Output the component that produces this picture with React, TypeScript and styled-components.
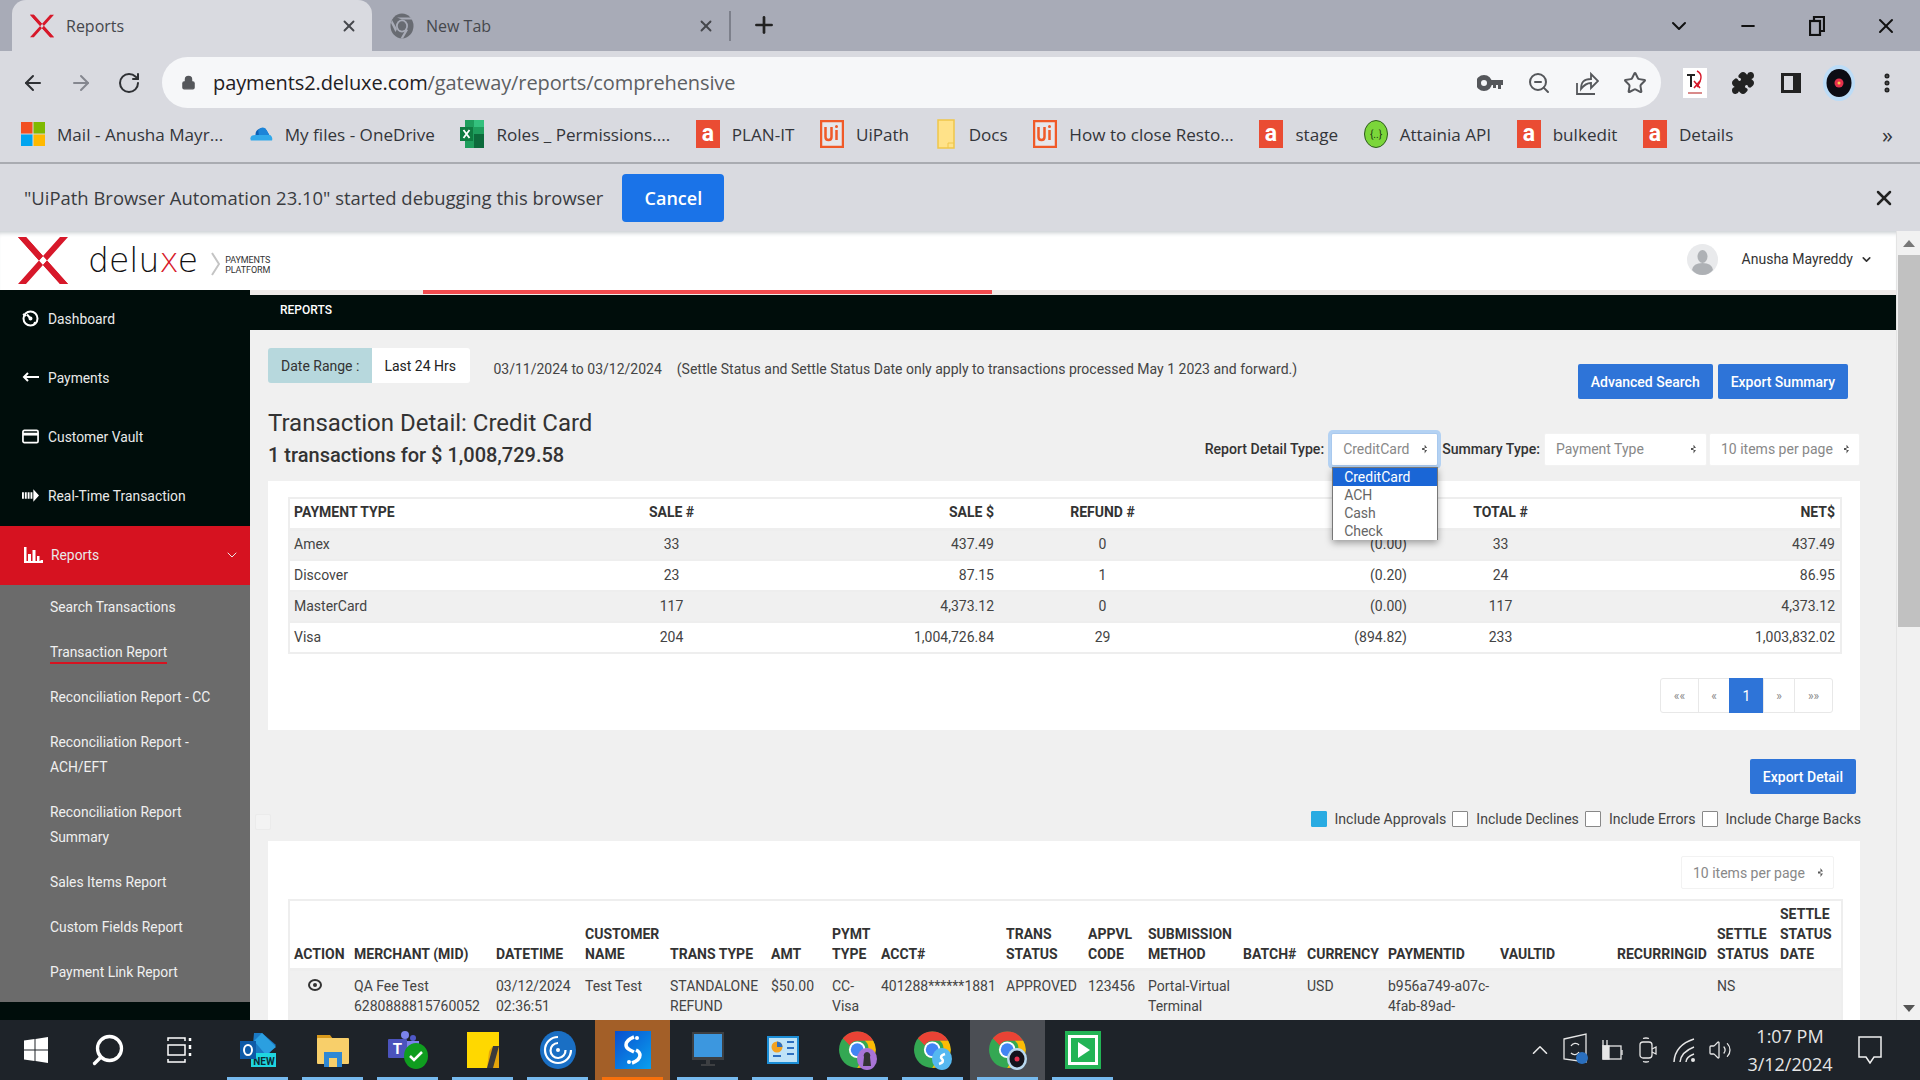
import { ChevronDown, Lock, ArrowLeft, ArrowRight, RotateCw, ZoomOut, Star, Puzzle, X, Plus, Minus, EllipsisVertical, Search, ChevronUp, Volume2 } from "lucide-react";
import styled, { createGlobalStyle } from "styled-components";

const Global = createGlobalStyle`
	html, body {
		margin: 0;
		padding: 0;
		width: 1920px;
		height: 1080px;
		overflow: hidden;
		background: #f0f0f0;
		font-family: Roboto, "Liberation Sans", sans-serif;
	}
	* {
		box-sizing: border-box;
	}
`;

const Shell = styled.div`
	width: 1920px;
	height: 1080px;
	display: flex;
	flex-direction: column;
	overflow: hidden;
`;

/* browser chrome */
const TabStrip = styled.div`
	height: 51px;
	flex: none;
	background: #a8abb7;
	display: flex;
	align-items: flex-end;
	padding-left: 12px;
	font-family: "Open Sans", sans-serif;
`;

const Tab = styled.div<{ $active?: boolean }>`
	width: ${(p) => (p.$active ? 360 : 357)}px;
	height: 51px;
	display: flex;
	align-items: center;
	gap: 12px;
	padding: 0 14px 0 18px;
	border-radius: 14px 14px 0 0;
	background: ${(p) => (p.$active ? "#d9dae0" : "transparent")};
	color: #45474c;
	font-size: 16px;
`;

const TabTitle = styled.span`
	flex: 1;
`;

const TabDivider = styled.div`
	width: 2px;
	height: 30px;
	margin-bottom: 10px;
	background: #7d808b;
`;

const NewTab = styled.div`
	margin: 0 0 13px 20px;
	height: 26px;
	color: #222;
`;

const WindowControls = styled.div`
	margin-left: auto;
	height: 51px;
	display: flex;
	align-items: center;
	color: #111;
`;

const WindowButton = styled.div`
	width: 69px;
	display: flex;
	justify-content: center;
`;

const Toolbar = styled.div`
	height: 57px;
	flex: none;
	background: #d9dae0;
	display: flex;
	align-items: center;
	padding: 6px 0 0 21px;
	color: #45474c;
`;

const NavButton = styled.div<{ $dim?: boolean }>`
	width: 24px;
	height: 24px;
	margin-right: 24px;
	color: ${(p) => (p.$dim ? "#85878f" : "#2e3034")};

	&:nth-child(3) {
		margin-right: 21px;
	}
`;

const UrlBar = styled.div`
	width: 1499px;
	height: 51px;
	border-radius: 26px;
	background: #f6f7f9;
	display: flex;
	align-items: center;
	padding: 0 14px 0 19px;
`;

const UrlText = styled.div`
	flex: 1;
	margin-left: 17px;
	font-family: "Open Sans", sans-serif;
	font-size: 20px;
	color: #5d5f63;
	letter-spacing: -0.1px;

	b {
		font-weight: 400;
		color: #1f2023;
	}
`;

const UrlIcons = styled.div`
	display: flex;
	align-items: center;
	gap: 24px;
	color: #55575b;
`;

const ExtIcons = styled.div`
	display: flex;
	align-items: center;
	gap: 24px;
	margin-left: 22px;
	color: #222;

	& > :nth-child(4) {
		margin: 0 -4px;
	}
`;

const Bookmarks = styled.div`
	height: 56px;
	flex: none;
	background: #d9dae0;
	border-bottom: 2px solid #a9abb1;
	display: flex;
	align-items: center;
	padding: 0 0 2px 21px;
	gap: 25.6px;
	font-family: "Open Sans", sans-serif;
	font-size: 17.1px;
	color: #33353a;
`;

const Bookmark = styled.div`
	display: flex;
	align-items: center;
	gap: 12px;
	white-space: nowrap;
`;

const MoreBookmarks = styled.div`
	margin-left: auto;
	margin-right: 27px;
	font-size: 22px;
`;

const InfoBar = styled.div`
	height: 67px;
	flex: none;
	background: #d9dae0;
	display: flex;
	align-items: center;
	padding: 0 24px;
	gap: 19px;
	font-family: "Open Sans", sans-serif;
	font-size: 18.45px;
	color: #3a3c40;
`;

const CancelButton = styled.div`
	width: 102px;
	height: 48px;
	border-radius: 4px;
	background: #1a73e8;
	color: #fff;
	font-weight: 600;
	display: flex;
	align-items: center;
	justify-content: center;
	font-size: 18px;
`;

const InfoClose = styled.div`
	margin-left: auto;
	height: 24px;
	color: #222;
`;

/* page */
const Page = styled.div`
	flex: 1;
	min-height: 0;
	display: flex;
`;

const Viewport = styled.div`
	flex: 1;
	min-width: 0;
	display: flex;
	flex-direction: column;
	overflow: hidden;
`;

const Header = styled.header`
	height: 59px;
	flex: none;
	background: #fff;
	display: flex;
	align-items: center;
	padding: 0 23px 0 18px;
	box-shadow: inset 0 5px 4px -3px #c9ced2;
`;

const LogoWord = styled.div`
	margin-left: 20px;
	font-family: "DejaVu Sans", sans-serif;
	font-size: 33px;
	font-weight: 300;
	line-height: 1;
	color: #111;

	i {
		font-style: normal;
		color: #d7182a;
	}
`;

const LogoChevron = styled.div`
	margin: 6px 5px 0 13px;
	height: 24px;
`;

const LogoTag = styled.div`
	font-size: 9px;
	letter-spacing: -0.1px;
	line-height: 10px;
	color: #333;
	margin-top: 8px;
`;

const UserBox = styled.div`
	margin: 0 0 2px auto;
	display: flex;
	align-items: center;
	font-size: 14px;
	color: #333;
`;

const UserName = styled.span`
	margin: 0 7px 1px 24px;
`;

const Body = styled.div`
	flex: 1;
	min-height: 0;
	display: flex;
`;

const Sidebar = styled.nav`
	width: 250px;
	flex: none;
	background: #000d0b;
	color: #e9e9e9;
	font-size: 13.85px;
`;

const NavItem = styled.div<{ $active?: boolean }>`
	height: 59px;
	display: flex;
	align-items: center;
	gap: ${(p) => (p.$active ? 8 : 9)}px;
	padding: 0 10px 2px ${(p) => (p.$active ? 24 : 22)}px;
	background: ${(p) => (p.$active ? "#d61220" : "transparent")};
`;

const NavChevron = styled.div`
	margin-left: auto;
	height: 16px;
`;

const SubMenu = styled.div`
	background: #6b6b6b;
	padding-bottom: 7px;
`;

const SubItem = styled.div`
	padding: 10px 30px 10px 50px;
	line-height: 25px;
	color: #f0f0f0;
`;

const Underlined = styled.span`
	display: inline-block;
	line-height: 19px;
	border-bottom: 2px solid #d61220;
`;

const Main = styled.main`
	flex: 1;
	min-width: 0;
	overflow: hidden;
	background: #f0f0f0;
`;

const LoadTrack = styled.div`
	height: 5px;
	background: #efebe9;
	display: flex;
`;

const LoadBar = styled.div`
	width: 569px;
	height: 4px;
	margin-left: 173px;
	background: #f24b4f;
`;

const SubBar = styled.div`
	height: 35px;
	background: #000d0b;
	color: #fff;
	font-size: 12px;
	font-weight: 500;
	display: flex;
	align-items: center;
	padding: 0 0 6px 30px;
`;

const Content = styled.div`
	padding: 18px 36px 0 18px;
	color: #333;
`;

const TopRow = styled.div`
	display: flex;
	height: 51px;
	font-size: 14px;
`;

const DateLabel = styled.div`
	height: 35px;
	display: flex;
	align-items: center;
	padding: 0 13px;
	border-radius: 3px 0 0 3px;
	background: #b7d8dd;
`;

const DateValue = styled.div`
	height: 35px;
	width: 98px;
	display: flex;
	align-items: center;
	padding-left: 12px;
	border-radius: 0 3px 3px 0;
	background: #fff;
	color: #222;
`;

const DateNote = styled.div`
	height: 35px;
	margin-left: 23px;
	display: flex;
	align-items: center;
	gap: 15px;
	padding-top: 6px;
	color: #444;
`;

const TopActions = styled.div`
	margin-left: auto;
	margin-right: 12px;
	padding-top: 16px;
	display: flex;
	gap: 5px;
`;

const PrimaryButton = styled.div`
	height: 35px;
	padding: 0 13px;
	border-radius: 2px;
	background: #2e74d8;
	color: #fff;
	font-size: 14px;
	font-weight: 500;
	display: flex;
	align-items: center;
`;

const TitleRow = styled.div`
	height: 73px;
	margin-top: 9px;
	display: flex;
	justify-content: space-between;
`;

const Title = styled.h1`
	margin: 0;
	font-size: 24px;
	font-weight: 400;
	line-height: 30px;
	color: #333;
`;

const SubTitle = styled.h2`
	margin: 5px 0 0;
	font-size: 20px;
	font-weight: 500;
	line-height: 24px;
	color: #333;
`;

const Filters = styled.div`
	display: flex;
	align-items: center;
	height: 34px;
	margin-top: 24px;
	font-size: 14.1px;
	font-weight: 500;
`;

const FilterLabel = styled.span`
	margin-right: 4px;
	white-space: nowrap;

	&:first-child {
		margin-right: 7px;
	}
`;

const SelectWrap = styled.div`
	position: relative;
`;

const Select = styled.div<{ $w: number; $focus?: boolean }>`
	width: ${(p) => p.$w}px;
	height: 33px;
	margin-right: ${(p) => (p.$focus ? 4 : 2)}px;
	padding: 0 10px 0 11px;
	display: flex;
	align-items: center;
	justify-content: space-between;
	font-size: 14px;
	font-weight: 400;
	color: #888;
	background: #fff;
	border: 1px solid ${(p) => (p.$focus ? "#a9c9ee" : "#f2f2f2")};
	box-shadow: ${(p) => (p.$focus ? "0 0 0 3px #b4d2f3" : "none")};
	border-radius: 2px;

	&:last-child {
		margin-right: 0;
	}

	&::after {
		content: "";
		width: 5px;
		height: 9px;
		background: #555;
		clip-path: polygon(50% 0, 100% 38%, 0 38%, 0 62%, 100% 62%, 50% 100%);
	}
`;

const Dropdown = styled.ul`
	position: absolute;
	left: 1px;
	top: 34px;
	width: 106px;
	margin: 0;
	padding: 0;
	list-style: none;
	background: #fff;
	border: 1px solid #777;
	border-bottom: 0;
	box-shadow: 0 3px 7px rgba(0, 0, 0, 0.35);
	font-size: 14px;
	font-weight: 400;
	color: #666;
	z-index: 3;
`;

const DropdownOption = styled.li<{ $selected?: boolean }>`
	height: 18px;
	line-height: 18px;
	padding-left: 11px;
	background: ${(p) => (p.$selected ? "#1a66d6" : "transparent")};
	color: ${(p) => (p.$selected ? "#fff" : "#666")};
`;

const Card = styled.section`
	background: #fff;
	padding: 16px 20px 17px;
`;

const DataTable = styled.table`
	width: 100%;
	border-collapse: collapse;
	table-layout: fixed;
	border: 2px solid #eee;
	font-size: 14px;
	color: #444;
`;

const HeadCell = styled.th<{ $align?: string }>`
	padding: 0 5px 2px 4px;
	height: 31px;
	font-weight: 700;
	color: #333;
	text-align: ${(p) => p.$align || "left"};
	border-bottom: 3px solid #eee;
`;

const Row = styled.tr<{ $shade?: boolean }>`
	background: ${(p) => (p.$shade ? "#f0f0f0" : "#fff")};
	border-bottom: 2px solid #eee;
`;

const Cell = styled.td<{ $align?: string }>`
	padding: 0 5px 2px 4px;
	height: 31px;
	text-align: ${(p) => p.$align || "left"};
`;

const Pager = styled.div`
	margin: 24px 7px 0 0;
	display: flex;
	justify-content: flex-end;
`;

const PageButton = styled.div<{ $w: number; $active?: boolean }>`
	width: ${(p) => p.$w}px;
	height: 35px;
	display: flex;
	align-items: center;
	justify-content: center;
	border: 1px solid #e8e8e8;
	margin-left: -1px;
	font-size: ${(p) => (p.$active ? 14 : 12)}px;
	color: ${(p) => (p.$active ? "#fff" : "#888")};
	background: ${(p) => (p.$active ? "#2e74d8" : "#fff")};
	border-color: ${(p) => (p.$active ? "#2e74d8" : "#e8e8e8")};

	&:first-child {
		border-radius: 3px 0 0 3px;
	}
	&:last-child {
		border-radius: 0 3px 3px 0;
	}
`;

const ExportRow = styled.div`
	margin: 29px 4px 0 0;
	display: flex;
	justify-content: flex-end;
`;

const IncludeRow = styled.div`
	margin: 17px -1px 0 0;
	height: 16px;
	display: flex;
	justify-content: flex-end;
	align-items: center;
	font-size: 14.1px;
	color: #444;
`;

const FaintBox = styled.span`
	width: 16px;
	height: 16px;
	margin: 6px auto 0 -13px;
	border: 1px solid #ebebeb;
	border-radius: 2px;
	background: #f3f3f3;
`;

const Include = styled.label`
	display: flex;
	align-items: center;
	gap: 8px;
	margin-left: 6px;
`;

const CheckBox = styled.span<{ $on?: boolean }>`
	width: 16px;
	height: 16px;
	background: ${(p) => (p.$on ? "#29abe2" : "#fff")};
	border: 1px solid ${(p) => (p.$on ? "#29abe2" : "#888")};
	border-radius: 1px;
`;

const DetailCard = styled(Card)`
	margin-top: 14px;
	padding: 15px 20px 0;
`;

const DetailTools = styled.div`
	display: flex;
	justify-content: flex-end;
	padding-right: 6px;
	margin-bottom: 10px;
`;

const DetailCol = styled.col<{ $w: number }>`
	width: ${(p) => p.$w}px;
`;

const DetailHead = styled.th`
	padding: 3px 3px 4px 4px;
	vertical-align: bottom;
	text-align: left;
	font-weight: 700;
	line-height: 20px;
	color: #333;
	border-bottom: 3px solid #eee;
`;

const DetailCell = styled.td`
	padding: 5px 3px 5px 4px;
	vertical-align: top;
	line-height: 20px;
`;

const EyeMark = styled.svg`
	display: block;
	margin: 3px 0 0 14px;
`;

const ScrollBar = styled.div`
	width: 24px;
	flex: none;
	background: #f1f1f1;
	border-left: 1px solid #e4e4e4;
	display: flex;
	flex-direction: column;
	align-items: center;
`;

const ScrollArrow = styled.div<{ $down?: boolean }>`
	width: 0;
	height: 0;
	margin-top: ${(p) => (p.$down ? "auto" : "9px")};
	margin-bottom: ${(p) => (p.$down ? "8px" : "0")};
	border-left: 6px solid transparent;
	border-right: 6px solid transparent;
	border-bottom: ${(p) => (p.$down ? "0" : "7px solid #777")};
	border-top: ${(p) => (p.$down ? "7px solid #555" : "0")};
`;

const ScrollThumb = styled.div`
	width: 22px;
	height: 372px;
	margin-top: 8px;
	background: #c1c1c1;
`;

/* taskbar */
const TaskBar = styled.footer`
	height: 60px;
	flex: none;
	background: #1e2329;
	display: flex;
	align-items: stretch;
	color: #fff;
	font-family: "Open Sans", sans-serif;
`;

const StartSlot = styled.div`
	width: 72px;
	flex: none;
	display: flex;
	align-items: center;
	justify-content: center;

	&:nth-child(3) {
		margin-right: 4px;
	}
`;

const TaskSlot = styled.div<{ $tone?: string; $line?: string }>`
	width: 75px;
	flex: none;
	display: flex;
	align-items: center;
	justify-content: center;
	background: ${(p) => p.$tone || "transparent"};
	position: relative;

	&::after {
		content: "";
		position: absolute;
		left: 7px;
		right: 7px;
		bottom: 0;
		height: 3px;
		background: ${(p) => p.$line || "#76b9ed"};
	}
`;

const Tray = styled.div`
	margin-left: auto;
	display: flex;
	align-items: center;
	padding-right: 38px;
	color: #e6e6e6;
`;

const TrayItem = styled.div`
	width: 36px;
	display: flex;
	justify-content: center;
`;

const Clock = styled.div`
	width: 92px;
	margin: 0 22px 0 6px;
	text-align: center;
	font-size: 18px;
	line-height: 28px;
`;

/* drawings */
const XMark = ({ w, h }: { w: number; h: number }) => (
	<svg width={w} height={h} viewBox="0 0 50 47">
		<path d="M0 0h8l42 47h-8zM50 0h-8L0 47h8z" fill="#d7182a" />
		<path d="M0 0h8l17 19-4 4.500zM50 47h-8L25 28l4-4.500z" fill="#d7182a" />
	</svg>
);

const ATile = () => (
	<svg width="24" height="28" viewBox="0 0 24 28">
		<rect width="24" height="28" fill="#ea4c33" />
		<text x="12" y="21" textAnchor="middle" fontSize="23" fontWeight="700" fill="#fff" fontFamily="Roboto">a</text>
	</svg>
);

const UiTile = () => (
	<svg width="24" height="28" viewBox="0 0 24 28">
		<rect x="1" y="1" width="22" height="26" fill="#fff" fillOpacity="0.35" stroke="#f05a28" strokeWidth="2.500" />
		<path d="M5.500 7v10q0 3 3 3t3-3V7M16.500 10v10" fill="none" stroke="#f05a28" strokeWidth="2.500" />
		<circle cx="16.500" cy="6.500" r="1.500" fill="#f05a28" />
	</svg>
);

const Windows4 = () => (
	<svg width="24" height="24" viewBox="0 0 24 26" preserveAspectRatio="none">
		<rect width="11.500" height="12.500" fill="#f25022" />
		<rect x="12.500" width="11.500" height="12.500" fill="#7fba00" />
		<rect y="13.500" width="11.500" height="12.500" fill="#00a4ef" />
		<rect x="12.500" y="13.500" width="11.500" height="12.500" fill="#ffb900" />
	</svg>
);

const OneDrive = () => (
	<svg width="24" height="24" viewBox="0 0 26 24">
		<path d="M7 13a7 7 0 0 1 12-5l4 7H6z" fill="#0a5fb5" />
		<path d="M10 8q3-5 8-2l4 7-11 3z" fill="#1c84d8" />
		<path d="M2 19q-2-6 5-6h16q3 2 2 6z" fill="#31a8ea" />
	</svg>
);

const Excel = () => (
	<svg width="24" height="28" viewBox="0 0 24 28">
		<rect x="5" width="19" height="28" fill="#1f9e5d" />
		<rect x="14" y="14" width="10" height="14" fill="#0d6b3c" />
		<rect x="14" width="10" height="7" fill="#34c07d" />
		<rect y="7" width="13" height="14" fill="#0f7b41" />
		<path d="M3.500 10l6 8M9.500 10l-6 8" stroke="#fff" strokeWidth="1.800" />
	</svg>
);

const Folder = () => (
	<svg width="22" height="30" viewBox="0 0 22 30">
		<path d="M3 1h16v28H3z" fill="#ffe289" stroke="#f0c64a" strokeWidth="1.500" />
		<path d="M13 29v-5h6" fill="none" stroke="#f0c64a" />
	</svg>
);

const ApiIcon = () => (
	<svg width="24" height="28" viewBox="0 0 24 28">
		<ellipse cx="12" cy="14" rx="11.500" ry="13.500" fill="#7bd63a" stroke="#2d5a1e" strokeWidth="1" />
		<text x="12" y="18" textAnchor="middle" fontSize="10" fill="#1b3313" fontFamily="Roboto">{"{..}"}</text>
	</svg>
);

const GreyChrome = () => (
	<svg width="24" height="26" viewBox="0 0 48 52">
		<ellipse cx="24" cy="26" rx="23" ry="25" fill="#686b72" />
		<ellipse cx="24" cy="26" rx="12" ry="13" fill="#a8abb7" />
		<ellipse cx="24" cy="26" rx="8.500" ry="9.500" fill="#686b72" />
		<path d="M24 13h21l-2-4H14zM14 32L4 14l-2 6 9 18zM32 32l-11 19h5l10-17z" fill="#a8abb7" />
	</svg>
);

const KeyIcon = () => (
	<svg width="26" height="22" viewBox="0 0 26 22" fill="#55575b">
		<path d="M7 3a8 8 0 1 1 0 16A8 8 0 0 1 7 3zm0 5a3 3 0 1 0 0 6 3 3 0 0 0 0-6z" fillRule="evenodd" />
		<path d="M13 8h13v5h-2v4h-3v-4h-2v3h-3v-3h-3z" />
	</svg>
);

const ShareIcon = () => (
	<svg width="24" height="26" viewBox="0 0 24 26" fill="none" stroke="#55575b" strokeWidth="1.800">
		<path d="M2 13v11h18" />
		<path d="M6 19c0-7 3-10 10-10V4l7 7-7 7v-5c-4 0-7 2-10 6z" />
	</svg>
);

const PanelIcon = () => (
	<svg width="24" height="24" viewBox="0 0 24 24">
		<path d="M2 2h20v20H2z" fill="#222" />
		<path d="M5 5h9v14H5z" fill="#d9dae0" />
	</svg>
);

const TxIcon = () => (
	<svg width="24" height="30" viewBox="0 0 24 30">
		<rect width="24" height="30" fill="#fff" />
		<path d="M4 7h8M8 7v12" stroke="#222" strokeWidth="2" />
		<path d="M11 13l6 7M17 13l-6 7" stroke="#d7182a" strokeWidth="1.600" />
		<path d="M14 3q8 4 0 16" fill="none" stroke="#d7182a" strokeWidth="1.400" />
		<rect x="5" y="24" width="14" height="2" fill="#d98a8a" />
	</svg>
);

const VinylAvatar = () => (
	<svg width="32" height="36" viewBox="0 0 32 36">
		<ellipse cx="16" cy="18" rx="16" ry="18" fill="#bcdcf7" />
		<ellipse cx="16" cy="18" rx="12.500" ry="14" fill="#0c0c14" />
		<circle cx="16" cy="18" r="4.500" fill="#e5304e" />
		<circle cx="16" cy="18" r="1.500" fill="#f7c948" />
	</svg>
);

const DashIcon = () => (
	<svg width="17" height="17" viewBox="0 0 17 17" fill="none" stroke="#fff" strokeWidth="2">
		<circle cx="8.500" cy="8.500" r="7" />
		<path d="M8.500 8.500L5 4.500M1 4l3 2M12 15l1-3" />
		<circle cx="8.500" cy="8.500" r="1" fill="#fff" />
	</svg>
);

const PayIcon = () => (
	<svg width="17" height="12" viewBox="0 0 17 12" fill="none" stroke="#fff" strokeWidth="2">
		<path d="M17 5H3M6 1L2 5l4 4" />
	</svg>
);

const VaultIcon = () => (
	<svg width="17" height="15" viewBox="0 0 18 15">
		<rect x="1" y="1" width="16" height="13" rx="1.500" fill="none" stroke="#fff" strokeWidth="1.800" />
		<rect x="1" y="3.500" width="16" height="3" fill="#fff" />
	</svg>
);

const RealtimeIcon = () => (
	<svg width="17" height="13" viewBox="0 0 18 13" fill="#fff">
		<path d="M0 3h2v7H0zM3 3h2v7H3zM6 3h2v7H6zM9 3h2v7H9zM12 0l6 6.500-6 6.500z" />
	</svg>
);

const BarsIcon = () => (
	<svg width="19" height="16" viewBox="0 0 19 16" fill="#fff">
		<path d="M0 0h2.500v16H0zM4 7h3v9H4zM8.500 3h3v13h-3zM13 9h2.500v7H13zM16.500 13H19v3h-2.500z" />
		<path d="M0 14h19v2H0z" />
	</svg>
);

const PersonIcon = () => (
	<svg width="31" height="31" viewBox="0 0 31 31">
		<circle cx="15.500" cy="15.500" r="15.500" fill="#e9eaec" />
		<ellipse cx="15.500" cy="12.500" rx="5" ry="6.500" fill="#aeb1b5" />
		<path d="M5 26q1-7 10.500-7T26 26q-4 5-10.500 5T5 26z" fill="#aeb1b5" />
	</svg>
);

const WinLogo = () => (
	<svg width="24" height="26" viewBox="0 0 24 26" fill="#fff">
		<path d="M0 3.500l10.500-1.500v10.500H0zM11.500 2L24 0v12.500H11.500zM0 13.500h10.500V24L0 22.500zM11.500 13.500H24V26l-12.500-2z" />
	</svg>
);

const TaskView = () => (
	<svg width="26" height="26" viewBox="0 0 26 26" fill="none" stroke="#fff" strokeWidth="1.500">
		<path d="M1 4V1h17v3M1 22v3h17v-3" />
		<rect x="1" y="8" width="17" height="10" />
		<path d="M23 1v3M23 8v4M23 16v3" strokeWidth="2.500" />
	</svg>
);

const OutlookIcon = () => (
	<svg width="36" height="34" viewBox="0 0 36 34">
		<path d="M14 0h8l14 12-8 10H12z" fill="#1a78c2" />
		<path d="M22 0l14 14-10 8L14 8z" fill="#2b9fe0" />
		<rect x="11" y="20" width="25" height="14" fill="#1fd5df" />
		<text x="24" y="31.500" fontSize="10" fontWeight="700" textAnchor="middle" fill="#0b2b33" fontFamily="Roboto">NEW</text>
		<rect y="8" width="16" height="18" fill="#0e5aa7" />
		<ellipse cx="8" cy="17" rx="4" ry="5" fill="none" stroke="#fff" strokeWidth="2" />
	</svg>
);

const ExplorerIcon = () => (
	<svg width="32" height="34" viewBox="0 0 32 34">
		<path d="M0 2h13l3 4H0z" fill="#d99a1c" />
		<rect y="5" width="32" height="26" rx="1" fill="#f8cf6a" />
		<rect x="7" y="19" width="18" height="15" fill="#2f88d4" />
		<rect x="12" y="25" width="8" height="9" fill="#f8cf6a" />
	</svg>
);

const TeamsIcon = () => (
	<svg width="40" height="38" viewBox="0 0 40 38">
		<circle cx="17" cy="4" r="4" fill="#7b83eb" />
		<circle cx="25" cy="7" r="3" fill="#5059c9" />
		<rect x="0" y="8" width="19" height="19" rx="1" fill="#4b53bc" />
		<text x="9.500" y="23" fontSize="15" fontWeight="700" textAnchor="middle" fill="#fff" fontFamily="Roboto">T</text>
		<path d="M19 10h12v10H19z" fill="#7b83eb" />
		<ellipse cx="28" cy="25" rx="12" ry="13" fill="#0f9d1f" />
		<path d="M22 25l4 4 8-8" stroke="#fff" strokeWidth="2.500" fill="none" />
	</svg>
);

const StickyIcon = () => (
	<svg width="32" height="36" viewBox="0 0 32 36">
		<rect width="32" height="36" fill="#ffd800" />
		<path d="M32 14v22H20l2-16q1-6 10-6z" fill="#e5a50a" />
		<path d="M20 36l6-22h6L26 36z" fill="#3b3b3b" />
	</svg>
);

const SwirlIcon = () => (
	<svg width="36" height="38" viewBox="0 0 36 38">
		<ellipse cx="18" cy="19" rx="18" ry="19" fill="#1a6fc4" />
		<path d="M18 6A13 13 0 1 0 31 19M18 12A7.500 7.500 0 1 0 25.500 19" fill="none" stroke="#fff" strokeWidth="2.200" />
		<circle cx="18" cy="19" r="2" fill="#fff" />
	</svg>
);

const STile = () => (
	<svg width="36" height="38" viewBox="0 0 36 38">
		<defs>
			<linearGradient id="stile" x1="0" y1="0" x2="1" y2="1">
				<stop offset="0" stopColor="#0a4fd0" />
				<stop offset="1" stopColor="#0aa0ee" />
			</linearGradient>
		</defs>
		<rect width="36" height="38" fill="url(#stile)" />
		<path d="M19 6q-8 3-8 8 0 3 4 5l4 2" fill="none" stroke="#fff" strokeWidth="3.500" />
		<path d="M17 32q8-3 8-8 0-3-4-5" fill="none" stroke="#fff" strokeWidth="3.500" />
		<circle cx="22" cy="7" r="2" fill="#fff" />
		<circle cx="14" cy="31" r="2" fill="#fff" />
	</svg>
);

const MonitorIcon = () => (
	<svg width="32" height="36" viewBox="0 0 32 36">
		<rect width="32" height="28" fill="#3d3f42" />
		<rect x="2" y="2" width="28" height="23" fill="#3c97df" />
		<path d="M14 28h4v4h-4zM9 32h14v2H9z" fill="#3d3f42" />
	</svg>
);

const PanelAppIcon = () => (
	<svg width="32" height="28" viewBox="0 0 32 28">
		<rect width="32" height="28" fill="#1c8ed6" />
		<rect x="2" y="2" width="28" height="24" fill="#bfe3f7" />
		<circle cx="10" cy="11" r="5.500" fill="#f3a21f" />
		<path d="M10 11V5.500a5.500 5.500 0 0 1 5.500 5.500z" fill="#2c6fc0" />
		<path d="M20 6h7M20 12h7M20 18h7M6 20h8" stroke="#2c6fc0" strokeWidth="2" />
	</svg>
);

const ChromeBadged = ({ tone }: { tone: "purple" | "blue" | "vinyl" }) => (
	<svg width="38" height="40" viewBox="0 0 38 40">
		<g transform="scale(0.76)">
			<circle cx="24" cy="26" r="24" fill="#34a853" />
			<path d="M24 2a24 24 0 0 1 21 12H24a12 12 0 0 0-10 6L5 11A24 24 0 0 1 24 2z" fill="#ea4335" />
			<path d="M45 14a24 24 0 0 1-21 36l10-17a12 12 0 0 0 0-19z" fill="#fbbc05" />
			<circle cx="24" cy="26" r="11" fill="#fff" />
			<circle cx="24" cy="26" r="8.500" fill="#4285f4" />
		</g>
		<ellipse cx="28" cy="29" rx="10" ry="11" fill={tone === "purple" ? "#a874d6" : tone === "blue" ? "#55b8f0" : "#b9d9f0"} />
		{tone === "vinyl" && <ellipse cx="28" cy="29" rx="7.500" ry="8.500" fill="#14141c" />}
		{tone === "vinyl" && <circle cx="28" cy="29" r="2.500" fill="#e5304e" />}
		{tone === "blue" && <path d="M31 24q-6 2-3 5t-3 5" fill="none" stroke="#fff" strokeWidth="2.500" />}
		{tone === "purple" && <path d="M28 22a3.500 3.500 0 0 1 3 5l1 9h-8l1-9a3.500 3.500 0 0 1 3-5z" fill="#333" />}
	</svg>
);

const PlayTile = () => (
	<svg width="36" height="38" viewBox="0 0 36 38">
		<rect width="36" height="38" fill="#22b455" />
		<rect x="3" y="4" width="30" height="30" fill="#fff" />
		<rect x="6" y="7" width="24" height="24" fill="#22b455" />
		<path d="M13 11l12 8-12 8z" fill="#fff" />
	</svg>
);

const SyncTray = () => (
	<svg width="26" height="36" viewBox="0 0 26 36" fill="none" stroke="#e6e6e6" strokeWidth="1.300">
		<path d="M1 7l22-5v28L1 27z" />
		<path d="M8 14a5 5 0 0 1 8-1M16 20a5 5 0 0 1-8 1" />
		<circle cx="19" cy="26" r="6" fill="#2a6fbe" stroke="none" />
	</svg>
);

const BatteryTray = () => (
	<svg width="24" height="22" viewBox="0 0 24 22" fill="none" stroke="#e6e6e6" strokeWidth="1.300">
		<rect x="3" y="7" width="18" height="13" />
		<path d="M22 11v5" />
		<rect x="3" y="7" width="6" height="13" fill="#e6e6e6" />
		<path d="M3 1v6M7 1v6" />
	</svg>
);

const MeetTray = () => (
	<svg width="18" height="26" viewBox="0 0 18 26" fill="none" stroke="#e6e6e6" strokeWidth="1.300">
		<rect x="1" y="5" width="12" height="16" rx="3" />
		<path d="M4 1.500q3-1 6 0M4 24.500q3 1 6 0M13 12l4-2v7l-4-2" />
	</svg>
);

const WifiTray = () => (
	<svg width="24" height="26" viewBox="0 0 24 26" fill="none" stroke="#e6e6e6" strokeWidth="1.500">
		<path d="M2 25Q3 8 22 2M8 25q1-10 14-15M14 25q0-5 8-8" />
		<circle cx="21" cy="23" r="2" fill="#e6e6e6" stroke="none" />
	</svg>
);

const NoteTray = () => (
	<svg width="24" height="28" viewBox="0 0 24 28" fill="none" stroke="#f0f0f0" strokeWidth="1.500">
		<path d="M1 1h22v20h-7l-4 6-4-6H1z" />
	</svg>
);

const detailColumns = [
	{ w: 61, label: ["ACTION"] },
	{ w: 142, label: ["MERCHANT (MID)"] },
	{ w: 89, label: ["DATETIME"] },
	{ w: 85, label: ["CUSTOMER", "NAME"] },
	{ w: 101, label: ["TRANS TYPE"] },
	{ w: 61, label: ["AMT"] },
	{ w: 49, label: ["PYMT", "TYPE"] },
	{ w: 125, label: ["ACCT#"] },
	{ w: 82, label: ["TRANS", "STATUS"] },
	{ w: 60, label: ["APPVL", "CODE"] },
	{ w: 95, label: ["SUBMISSION", "METHOD"] },
	{ w: 64, label: ["BATCH#"] },
	{ w: 81, label: ["CURRENCY"] },
	{ w: 112, label: ["PAYMENTID"] },
	{ w: 117, label: ["VAULTID"] },
	{ w: 100, label: ["RECURRINGID"] },
	{ w: 63, label: ["SETTLE", "STATUS"] },
	{ w: 66, label: ["SETTLE", "STATUS", "DATE"] },
];

const summaryWidths = [320, 126, 264, 208, 205, 178, 251];
const summaryAligns = ["left", "center", "right", "center", "right", "center", "right"];
const summaryHead = ["PAYMENT TYPE", "SALE #", "SALE $", "REFUND #", "REFUND $", "TOTAL #", "NET$"];
const summaryRows = [
	["Amex", "33", "437.49", "0", "(0.00)", "33", "437.49"],
	["Discover", "23", "87.15", "1", "(0.20)", "24", "86.95"],
	["MasterCard", "117", "4,373.12", "0", "(0.00)", "117", "4,373.12"],
	["Visa", "204", "1,004,726.84", "29", "(894.82)", "233", "1,003,832.02"],
];

const detailRow = [
	"",
	"QA Fee Test 6280888815760052",
	"03/12/2024 02:36:51",
	"Test Test",
	"STANDALONE REFUND",
	"$50.00",
	"CC-Visa",
	"401288******1881",
	"APPROVED",
	"123456",
	"Portal-Virtual Terminal",
	"",
	"USD",
	"b956a749-a07c-4fab-89ad-",
	"",
	"",
	"NS",
	"",
];

const subItems = [
	"Search Transactions",
	"Transaction Report",
	"Reconciliation Report - CC",
	"Reconciliation Report - ACH/EFT",
	"Reconciliation Report Summary",
	"Sales Items Report",
	"Custom Fields Report",
	"Payment Link Report",
];

function App() {
	return (
		<Shell>
			<Global />
			<TabStrip>
				<Tab $active>
					<XMark w={24} h={24} />
					<TabTitle>Reports</TabTitle>
					<X size={18} strokeWidth={2.5} />
				</Tab>
				<Tab>
					<GreyChrome />
					<TabTitle>New Tab</TabTitle>
					<X size={18} strokeWidth={2.5} />
				</Tab>
				<TabDivider />
				<NewTab>
					<Plus size={26} strokeWidth={2.5} />
				</NewTab>
				<WindowControls>
					<WindowButton><ChevronDown size={24} /></WindowButton>
					<WindowButton><Minus size={20} strokeWidth={2.5} /></WindowButton>
					<WindowButton>
						<svg width="16" height="20" viewBox="0 0 16 20" fill="none" stroke="#111" strokeWidth="2.200">
							<rect x="1" y="5" width="10" height="14" />
							<path d="M5 5V1h10v14h-4" />
						</svg>
					</WindowButton>
					<WindowButton><X size={24} /></WindowButton>
				</WindowControls>
			</TabStrip>

			<Toolbar>
				<NavButton><ArrowLeft size={24} /></NavButton>
				<NavButton $dim><ArrowRight size={24} /></NavButton>
				<NavButton><RotateCw size={24} /></NavButton>
				<UrlBar>
					<Lock size={15} fill="#55575b" color="#55575b" />
					<UrlText><b>payments2.deluxe.com</b>/gateway/reports/comprehensive</UrlText>
					<UrlIcons>
						<KeyIcon />
						<ZoomOut size={24} />
						<ShareIcon />
						<Star size={24} />
					</UrlIcons>
				</UrlBar>
				<ExtIcons>
					<TxIcon />
					<Puzzle size={24} fill="#222" />
					<PanelIcon />
					<VinylAvatar />
					<EllipsisVertical size={24} strokeWidth={3} />
				</ExtIcons>
			</Toolbar>

			<Bookmarks>
				<Bookmark><Windows4 />Mail - Anusha Mayr...</Bookmark>
				<Bookmark><OneDrive />My files - OneDrive</Bookmark>
				<Bookmark><Excel />Roles _ Permissions....</Bookmark>
				<Bookmark><ATile />PLAN-IT</Bookmark>
				<Bookmark><UiTile />UiPath</Bookmark>
				<Bookmark><Folder />Docs</Bookmark>
				<Bookmark><UiTile />How to close Resto...</Bookmark>
				<Bookmark><ATile />stage</Bookmark>
				<Bookmark><ApiIcon />Attainia API</Bookmark>
				<Bookmark><ATile />bulkedit</Bookmark>
				<Bookmark><ATile />Details</Bookmark>
				<MoreBookmarks>»</MoreBookmarks>
			</Bookmarks>

			<InfoBar>
				"UiPath Browser Automation 23.10" started debugging this browser
				<CancelButton>Cancel</CancelButton>
				<InfoClose><X size={24} strokeWidth={2.5} /></InfoClose>
			</InfoBar>

			<Page>
				<Viewport>
					<Header>
						<XMark w={50} h={47} />
						<LogoWord>delu<i>x</i>e</LogoWord>
						<LogoChevron>
							<svg width="9" height="24" viewBox="0 0 9 24" fill="none" stroke="#c4c4c4" strokeWidth="2">
								<path d="M1 1l7 11-7 11" />
							</svg>
						</LogoChevron>
						<LogoTag>PAYMENTS<br />PLATFORM</LogoTag>
						<UserBox>
							<PersonIcon />
							<UserName>Anusha Mayreddy</UserName>
							<ChevronDown size={13} strokeWidth={3} />
						</UserBox>
					</Header>
					<Body>
						<Sidebar>
							<NavItem><DashIcon />Dashboard</NavItem>
							<NavItem><PayIcon />Payments</NavItem>
							<NavItem><VaultIcon />Customer Vault</NavItem>
							<NavItem><RealtimeIcon />Real-Time Transaction</NavItem>
							<NavItem $active>
								<BarsIcon />Reports
								<NavChevron><ChevronDown size={16} strokeWidth={1.5} /></NavChevron>
							</NavItem>
							<SubMenu>
								{subItems.map((item) => (
									<SubItem key={item}>
										{item === "Transaction Report" ? <Underlined>{item}</Underlined> : item}
									</SubItem>
								))}
							</SubMenu>
						</Sidebar>
						<Main>
							<LoadTrack><LoadBar /></LoadTrack>
							<SubBar>REPORTS</SubBar>
							<Content>
								<TopRow>
									<DateLabel>Date Range :</DateLabel>
									<DateValue>Last 24 Hrs</DateValue>
									<DateNote>
										<span>03/11/2024 to 03/12/2024</span>
										<span>(Settle Status and Settle Status Date only apply to transactions processed May 1 2023 and forward.)</span>
									</DateNote>
									<TopActions>
										<PrimaryButton>Advanced Search</PrimaryButton>
										<PrimaryButton>Export Summary</PrimaryButton>
									</TopActions>
								</TopRow>
								<TitleRow>
									<div>
										<Title>Transaction Detail: Credit Card</Title>
										<SubTitle>1 transactions for $ 1,008,729.58</SubTitle>
									</div>
									<Filters>
										<FilterLabel>Report Detail Type:</FilterLabel>
										<SelectWrap>
											<Select $w={107} $focus>CreditCard</Select>
											<Dropdown>
												<DropdownOption $selected>CreditCard</DropdownOption>
												<DropdownOption>ACH</DropdownOption>
												<DropdownOption>Cash</DropdownOption>
												<DropdownOption>Check</DropdownOption>
											</Dropdown>
										</SelectWrap>
										<FilterLabel>Summary Type:</FilterLabel>
										<Select $w={163}>Payment Type</Select>
										<Select $w={151}>10 items per page</Select>
									</Filters>
								</TitleRow>
								<Card>
									<DataTable>
										<colgroup>
											{summaryWidths.map((w, i) => <DetailCol key={i} $w={w} />)}
										</colgroup>
										<thead>
											<tr>
												{summaryHead.map((h, i) => (
													<HeadCell key={h} $align={summaryAligns[i]}>{h}</HeadCell>
												))}
											</tr>
										</thead>
										<tbody>
											{summaryRows.map((row, r) => (
												<Row key={row[0]} $shade={r % 2 === 0}>
													{row.map((c, i) => (
														<Cell key={i} $align={summaryAligns[i]}>{c}</Cell>
													))}
												</Row>
											))}
										</tbody>
									</DataTable>
									<Pager>
										<PageButton $w={39}>««</PageButton>
										<PageButton $w={32}>«</PageButton>
										<PageButton $w={35} $active>1</PageButton>
										<PageButton $w={32}>»</PageButton>
										<PageButton $w={39}>»»</PageButton>
									</Pager>
								</Card>
								<ExportRow>
									<PrimaryButton>Export Detail</PrimaryButton>
								</ExportRow>
								<IncludeRow>
									<FaintBox />
									<Include><CheckBox $on />Include Approvals</Include>
									<Include><CheckBox />Include Declines</Include>
									<Include><CheckBox />Include Errors</Include>
									<Include><CheckBox />Include Charge Backs</Include>
								</IncludeRow>
								<DetailCard>
									<DetailTools>
										<Select $w={153}>10 items per page</Select>
									</DetailTools>
									<DataTable>
										<colgroup>
											{detailColumns.map((c, i) => <DetailCol key={i} $w={c.w} />)}
										</colgroup>
										<thead>
											<tr>
												{detailColumns.map((c, i) => (
													<DetailHead key={i}>
														{c.label.map((l) => <div key={l}>{l}</div>)}
													</DetailHead>
												))}
											</tr>
										</thead>
										<tbody>
											<Row $shade>
												{detailRow.map((c, i) => (
													<DetailCell key={i}>
														{i === 0 ? (
															<EyeMark width="14" height="12" viewBox="0 0 14 12">
																<ellipse cx="7" cy="6" rx="6" ry="5" fill="none" stroke="#333" strokeWidth="2" />
																<circle cx="7" cy="6" r="2" fill="#333" />
															</EyeMark>
														) : c}
													</DetailCell>
												))}
											</Row>
										</tbody>
									</DataTable>
								</DetailCard>
							</Content>
						</Main>
					</Body>
				</Viewport>
				<ScrollBar>
					<ScrollArrow />
					<ScrollThumb />
					<ScrollArrow $down />
				</ScrollBar>
			</Page>

			<TaskBar>
				<StartSlot><WinLogo /></StartSlot>
				<StartSlot><Search size={36} strokeWidth={2.2} transform="scale(-1,1)" /></StartSlot>
				<StartSlot><TaskView /></StartSlot>
				<TaskSlot><OutlookIcon /></TaskSlot>
				<TaskSlot><ExplorerIcon /></TaskSlot>
				<TaskSlot><TeamsIcon /></TaskSlot>
				<TaskSlot><StickyIcon /></TaskSlot>
				<TaskSlot><SwirlIcon /></TaskSlot>
				<TaskSlot $tone="#a35f28" $line="#f7700c"><STile /></TaskSlot>
				<TaskSlot><MonitorIcon /></TaskSlot>
				<TaskSlot><PanelAppIcon /></TaskSlot>
				<TaskSlot><ChromeBadged tone="purple" /></TaskSlot>
				<TaskSlot><ChromeBadged tone="blue" /></TaskSlot>
				<TaskSlot $tone="#4b4e54"><ChromeBadged tone="vinyl" /></TaskSlot>
				<TaskSlot><PlayTile /></TaskSlot>
				<Tray>
					<TrayItem><ChevronUp size={26} strokeWidth={1.5} /></TrayItem>
					<TrayItem><SyncTray /></TrayItem>
					<TrayItem><BatteryTray /></TrayItem>
					<TrayItem><MeetTray /></TrayItem>
					<TrayItem><WifiTray /></TrayItem>
					<TrayItem><Volume2 size={24} strokeWidth={1.3} /></TrayItem>
					<Clock>1:07 PM<br />3/12/2024</Clock>
					<NoteTray />
				</Tray>
			</TaskBar>
		</Shell>
	);
}

export default App;
